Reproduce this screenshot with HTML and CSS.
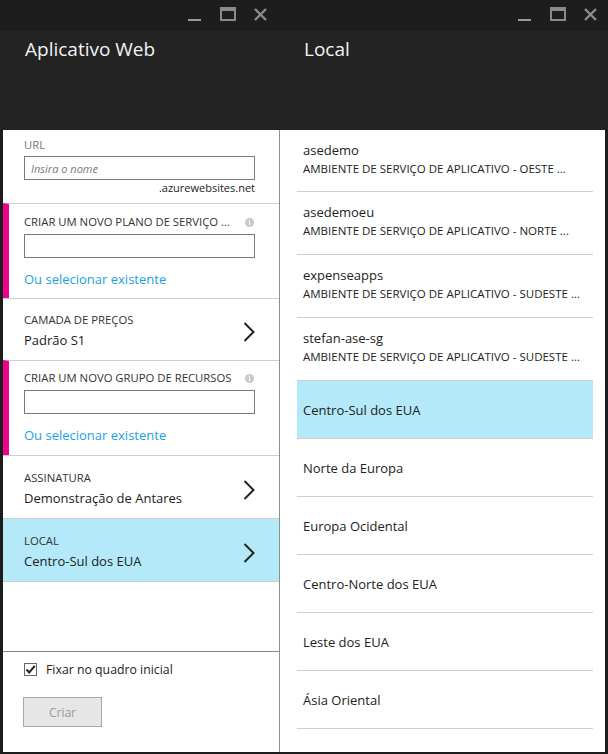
FILE: index.html
```html
<!DOCTYPE html>
<html lang="pt-BR">
<head>
<meta charset="utf-8">
<title>Aplicativo Web</title>
<link rel="stylesheet" href="styles.css">
</head>
<body>
<div class="app">
  <section class="blade blade-left">
    <div class="titlebar">
      <svg class="ctl" width="16" height="14" viewBox="0 0 16 14"><rect x="1" y="12" width="13" height="2" fill="#9a9a9a"/></svg>
      <svg class="ctl" width="16" height="14" viewBox="0 0 16 14"><rect x="1" y="1" width="14" height="12" fill="none" stroke="#8a8a8a" stroke-width="2"/><rect x="1" y="1" width="14" height="3" fill="#8a8a8a"/></svg>
      <svg class="ctl" width="16" height="14" viewBox="0 0 16 14"><path d="M2 2 L13 13 M13 2 L2 13" stroke="#8c8c8c" stroke-width="2.4"/></svg>
    </div>
    <div class="header"><h1 class="blade-title">Aplicativo Web</h1></div>
    <div class="content content-left">
      <div class="field field-url">
        <div class="label label-muted">URL</div>
        <div class="input"><span class="placeholder">Insira o nome</span></div>
        <div class="suffix">.azurewebsites.net</div>
      </div>
      <div class="field field-required field-plan">
        <div class="label-row"><span class="label">CRIAR UM NOVO PLANO DE SERVIÇO ...</span><svg class="info" width="9" height="9" viewBox="0 0 9 9"><circle cx="4.5" cy="4.5" r="4.5" fill="#c8c8c8"/><rect x="4" y="1.6" width="1.1" height="1.1" fill="#fff"/><rect x="4" y="3.5" width="1.1" height="3.8" fill="#fff"/></svg></div>
        <div class="input"></div>
        <a class="link">Ou selecionar existente</a>
      </div>
      <div class="row row-first">
        <div class="row-text">
          <div class="label">CAMADA DE PREÇOS</div>
          <div class="value">Padrão S1</div>
        </div>
        <svg class="chevron" width="12" height="20" viewBox="0 0 12 20"><polyline points="1.5,1 10.5,10 1.5,19" fill="none" stroke="#222" stroke-width="2"/></svg>
      </div>
      <div class="field field-required field-group">
        <div class="label-row"><span class="label">CRIAR UM NOVO GRUPO DE RECURSOS</span><svg class="info" width="9" height="9" viewBox="0 0 9 9"><circle cx="4.5" cy="4.5" r="4.5" fill="#c8c8c8"/><rect x="4" y="1.6" width="1.1" height="1.1" fill="#fff"/><rect x="4" y="3.5" width="1.1" height="3.8" fill="#fff"/></svg></div>
        <div class="input"></div>
        <a class="link">Ou selecionar existente</a>
      </div>
      <div class="row">
        <div class="row-text">
          <div class="label">ASSINATURA</div>
          <div class="value">Demonstração de Antares</div>
        </div>
        <svg class="chevron" width="12" height="20" viewBox="0 0 12 20"><polyline points="1.5,1 10.5,10 1.5,19" fill="none" stroke="#222" stroke-width="2"/></svg>
      </div>
      <div class="row row-selected">
        <div class="row-text">
          <div class="label">LOCAL</div>
          <div class="value">Centro-Sul dos EUA</div>
        </div>
        <svg class="chevron" width="12" height="20" viewBox="0 0 12 20"><polyline points="1.5,1 10.5,10 1.5,19" fill="none" stroke="#222" stroke-width="2"/></svg>
      </div>
      <div class="spacer"></div>
      <div class="footer">
        <label class="check-row">
          <span class="checkbox"><svg width="11" height="11" viewBox="0 0 11 11"><polyline points="1.5,5.5 4.2,8.5 9.8,1.8" fill="none" stroke="#222" stroke-width="2"/></svg></span>
          <span class="check-label">Fixar no quadro inicial</span>
        </label>
        <div class="button">Criar</div>
      </div>
    </div>
  </section>
  <section class="blade blade-right">
    <div class="titlebar titlebar-right">
      <svg class="ctl" width="16" height="14" viewBox="0 0 16 14"><rect x="1" y="12" width="13" height="2" fill="#9a9a9a"/></svg>
      <svg class="ctl" width="16" height="14" viewBox="0 0 16 14"><rect x="1" y="1" width="14" height="12" fill="none" stroke="#8a8a8a" stroke-width="2"/><rect x="1" y="1" width="14" height="3" fill="#8a8a8a"/></svg>
      <svg class="ctl" width="16" height="14" viewBox="0 0 16 14"><path d="M2 2 L13 13 M13 2 L2 13" stroke="#8c8c8c" stroke-width="2.4"/></svg>
    </div>
    <div class="header"><h1 class="blade-title">Local</h1></div>
    <div class="content content-right">
      <ul class="list">
        <li class="item item-two"><div class="item-title">asedemo</div><div class="item-sub">AMBIENTE DE SERVIÇO DE APLICATIVO - OESTE ...</div></li>
        <li class="item item-two"><div class="item-title">asedemoeu</div><div class="item-sub">AMBIENTE DE SERVIÇO DE APLICATIVO - NORTE ...</div></li>
        <li class="item item-two"><div class="item-title">expenseapps</div><div class="item-sub">AMBIENTE DE SERVIÇO DE APLICATIVO - SUDESTE ...</div></li>
        <li class="item item-two"><div class="item-title">stefan-ase-sg</div><div class="item-sub">AMBIENTE DE SERVIÇO DE APLICATIVO - SUDESTE ...</div></li>
        <li class="item item-one item-selected"><div class="item-title">Centro-Sul dos EUA</div></li>
        <li class="item item-one"><div class="item-title">Norte da Europa</div></li>
        <li class="item item-one"><div class="item-title">Europa Ocidental</div></li>
        <li class="item item-one"><div class="item-title">Centro-Norte dos EUA</div></li>
        <li class="item item-one"><div class="item-title">Leste dos EUA</div></li>
        <li class="item item-one"><div class="item-title">Ásia Oriental</div></li>
      </ul>
    </div>
  </section>
</div>
</body>
</html>
```
FILE: styles.css
```css
* { box-sizing: border-box; }
html, body { margin: 0; padding: 0; }
body {
  background: #1c1c1c;
  font-family: "Open Sans", "Noto Sans", sans-serif;
  color: #222;
}
.app {
  display: flex;
  width: 608px;
  height: 754px;
  background: #1c1c1c;
}
.blade {
  display: flex;
  flex-direction: column;
  height: 100%;
}
.blade-left { width: 280px; }
.blade-right { width: 328px; }
.titlebar {
  height: 31px;
  background: #1d1d1d;
  display: flex;
  justify-content: flex-end;
  align-items: flex-start;
  gap: 17px;
  padding: 7px 11px 0 0;
}
.titlebar-right { padding-right: 9px; }
.ctl { display: block; }
.header {
  height: 99px;
  background: #232323;
  padding: 4px 0 0 25px;
}
.blade-right .header { padding-left: 24px; }
.blade-title {
  margin: 0;
  font-weight: 400;
  font-size: 19px;
  line-height: 28px;
  color: #f2f2f2;
}
.content {
  flex: 1;
  background: #fff;
  margin-bottom: 2px;
}
.content-left {
  margin-left: 3px;
  border-right: 1px solid #8e8e8e;
  display: flex;
  flex-direction: column;
}
.content-right {
  margin-right: 3px;
  padding: 0 12px 0 17px;
}

/* left form */
.field {
  padding: 7px 24px 8px 21px;
}
.field + .field, .field + .row, .row + .field, .row + .row {
  border-top: 1px solid #cfcfcf;
}
.label {
  font-size: 11.3px;
  line-height: 16px;
  color: #333;
  white-space: nowrap;
}
.label-muted { color: #777; }
.input {
  height: 24px;
  border: 1px solid #7a7a7a;
  margin-top: 3px;
  padding: 0 6px;
  display: flex;
  align-items: center;
}
.placeholder {
  font-style: italic;
  font-size: 11px;
  color: #777;
}
.suffix {
  text-align: right;
  font-size: 11px;
  line-height: 15px;
  color: #222;
}
.field-required {
  border-left: 6px solid #ec008c;
  padding-left: 15px;
}
.field-plan { padding-top: 10px; padding-bottom: 9px; }
.field-group { padding-top: 9px; padding-bottom: 10px; }
.label-row {
  display: flex;
  justify-content: space-between;
  align-items: center;
  padding-right: 1px;
}
.info { display: block; }
.field-required .input { margin-top: 4px; }
.link {
  display: block;
  margin-top: 11px;
  font-size: 13px;
  line-height: 20px;
  color: #1ba1e2;
}
.row {
  display: flex;
  justify-content: space-between;
  align-items: center;
  padding: 13px 24px 10px 21px;
  height: 63px;
}
.row-first { height: 62px; }
.row-selected { background: #b3e9f8; }
.value {
  font-size: 13px;
  line-height: 20px;
  color: #222;
  margin-top: 2px;
}
.chevron { display: block; margin-top: 2px; }
.spacer {
  flex: 1;
  border-top: 1px solid #cfcfcf;
}
.footer {
  border-top: 1px solid #8a8a8a;
  padding: 11px 21px 25px 21px;
}
.check-row {
  display: flex;
  align-items: center;
  gap: 9px;
  height: 13px;
}
.checkbox {
  width: 13px;
  height: 13px;
  border: 1px solid #666;
  display: flex;
  align-items: center;
  justify-content: center;
}
.checkbox svg { display: block; }
.check-label {
  font-size: 12.3px;
  color: #222;
}
.button {
  margin-top: 21px;
  margin-left: -1px;
  width: 79px;
  height: 30px;
  background: #e6e6e6;
  border: 1px solid #a8a8a8;
  display: flex;
  align-items: center;
  justify-content: center;
  font-size: 12px;
  color: #999;
}

/* right list */
.list {
  list-style: none;
  margin: 0;
  padding: 0;
}
.item {
  border-bottom: 1px solid #cfcfcf;
  padding-left: 6px;
}
.item-two {
  height: 62px;
  padding-top: 10px;
}
.item-two + .item-two { height: 63px; }
.item-one {
  height: 58px;
  display: flex;
  align-items: center;
}
.item-selected { background: #b3e9f8; }
.item-title {
  font-size: 13px;
  line-height: 20px;
  color: #222;
}
.item-sub {
  font-size: 11.5px;
  line-height: 18px;
  color: #222;
  white-space: nowrap;
}
```
